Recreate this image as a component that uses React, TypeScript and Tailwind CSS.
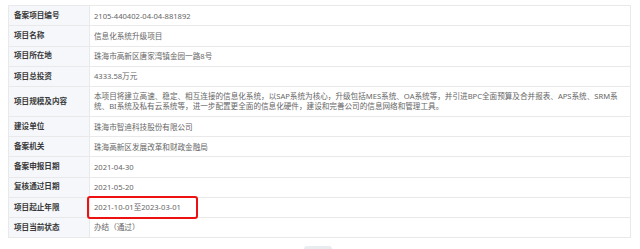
import React from "react";

type Row = { label: string; value: React.ReactNode; tall?: boolean; mark?: boolean };

const rows: Row[] = [
  { label: "备案项目编号", value: "2105-440402-04-04-881892" },
  { label: "项目名称", value: "信息化系统升级项目" },
  { label: "项目所在地", value: "珠海市高新区唐家湾镇金园一路8号" },
  { label: "项目总投资", value: "4333.58万元" },
  {
    label: "项目规模及内容",
    tall: true,
    value:
      "本项目将建立高速、稳定、相互连接的信息化系统，以SAP系统为核心，升级包括MES系统、OA系统等，并引进BPC全面预算及合并报表、APS系统、SRM系统、BI系统及私有云系统等，进一步配置更全面的信息化硬件，建设和完善公司的信息网络和管理工具。",
  },
  { label: "建设单位", value: "珠海市智迪科技股份有限公司" },
  { label: "备案机关", value: "珠海高新区发展改革和财政金融局" },
  { label: "备案申报日期", value: "2021-04-30" },
  { label: "复核通过日期", value: "2021-05-20" },
  { label: "项目起止年限", value: "2021-10-01至2023-03-01", mark: true },
  { label: "项目当前状态", value: "办结（通过）" },
];

export default function App() {
  return (
    <div
      className="relative w-[640px] h-[249px] overflow-hidden bg-white"
      style={{ fontFamily: '"Noto Sans", "Noto Sans CJK SC", sans-serif' }}
    >
      <div className="pl-[8px] pt-[5px] w-[631px]">
        <div className="border border-[#e9e9e9]">
          {rows.map((r, i) => (
            <div
              key={r.label}
              className={`flex ${
                i > 0 ? "border-t border-[#e9e9e9]" : ""
              } ${r.tall ? "h-[30px]" : i === 0 ? "h-[19.4px]" : "h-[20.2px]"}`}
            >
              <div className="w-[81px] shrink-0 bg-[#f5f7fa] border-r border-[#e9e9e9] flex items-center pl-[5px] text-[7.6px] font-bold text-[#3a3a3a]">
                {r.label}
              </div>
              <div className="relative flex-1 flex items-center pl-[4px] pr-[2px] text-[7.6px] text-[#666] leading-[10px] break-all">
                {r.value}
                {r.mark && (
                  <div className="absolute left-[-3px] top-[-2px] w-[111px] h-[23px] border-2 border-[#ee1111] rounded-[3px]" />
                )}
              </div>
            </div>
          ))}
        </div>
      </div>
      <div className="absolute left-[304px] top-[246px] w-[28px] h-[8px] rounded-[3px] bg-[#e8ebf0]" />
    </div>
  );
}
